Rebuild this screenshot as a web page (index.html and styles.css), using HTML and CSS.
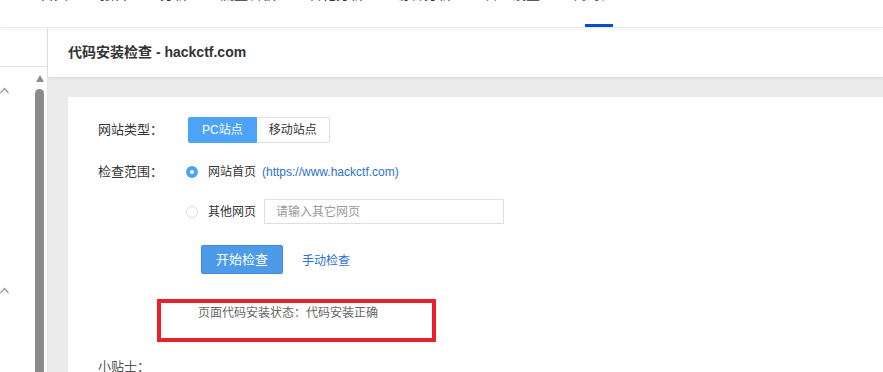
FILE: index.html
```html
<!DOCTYPE html>
<html>
<head>
<meta charset="utf-8">
<title>代码安装检查</title>
<link rel="stylesheet" href="styles.css">
</head>
<body>
<div class="topnav">
	<a class="nav-item">首页</a>
	<a class="nav-item">报告</a>
	<a class="nav-item">分析</a>
	<a class="nav-item">流量看板</a>
	<a class="nav-item">转化分析</a>
	<a class="nav-item">访客分析</a>
	<a class="nav-item">管理设置</a>
	<a class="nav-item active">代码检查</a>
</div>
<div class="main">
	<div class="side">
		<div class="side-top"></div>
		<div class="side-body">
			<div class="menu">
				<div class="menu-group">
					<svg class="chev" width="10" height="7" viewBox="0 0 10 7"><polyline points="0.5,6 4.5,1.5 8.5,6" fill="none" stroke="#8a96a8" stroke-width="1.2"/></svg>
				</div>
				<div class="menu-group">
					<svg class="chev" width="10" height="7" viewBox="0 0 10 7"><polyline points="0.5,6 4.5,1.5 8.5,6" fill="none" stroke="#8a96a8" stroke-width="1.2"/></svg>
				</div>
			</div>
			<div class="scrollbar">
				<span class="sb-arrow"></span>
				<span class="sb-thumb"></span>
			</div>
		</div>
	</div>
	<div class="content">
		<div class="head">代码安装检查 - hackctf.com</div>
		<div class="body">
			<div class="card">
				<div class="row">
					<span class="label">网站类型：</span>
					<div class="seg">
						<span class="seg-btn on">PC站点</span>
						<span class="seg-btn">移动站点</span>
					</div>
				</div>
				<div class="row top scope">
					<span class="label">检查范围：</span>
					<div class="options">
						<div class="opt">
							<span class="radio checked"></span>
							<span>网站首页</span>
							<span class="url">(https://www.hackctf.com)</span>
						</div>
						<div class="opt second">
							<span class="radio"></span>
							<span>其他网页</span>
							<input class="page-input" type="text" placeholder="请输入其它网页">
						</div>
					</div>
				</div>
				<div class="actions">
					<span class="btn">开始检查</span>
					<a class="link">手动检查</a>
				</div>
				<div class="status">页面代码安装状态：代码安装正确</div>
				<div class="mark"></div>
				<div class="tips">小贴士：</div>
			</div>
		</div>
	</div>
</div>
</body>
</html>
```

FILE: styles.css
```css
*{margin:0;padding:0;box-sizing:border-box;}
html,body{height:372px;overflow:hidden;}
body{background:#fff;font-family:"Liberation Sans","Noto Sans CJK SC",sans-serif;font-size:12px;color:#333;}

.topnav{height:28px;border-bottom:1px solid #ececec;display:flex;padding-left:40px;gap:32px;overflow:hidden;position:relative;z-index:2;box-shadow:0 1px 4px rgba(0,0,0,.05);background:#fff;}
.nav-item{font-size:14px;line-height:14px;margin-top:-13px;color:#333;position:relative;height:40px;}
.nav-item.active{color:#1d62d6;}
.nav-item.active:after{content:"";position:absolute;left:13px;top:37px;width:28px;height:3px;background:#0052cc;}

.main{display:flex;height:344px;}
.side{width:48px;border-right:1px solid #e6e6e6;background:#fff;display:flex;flex-direction:column;}
.side-top{height:39px;border-bottom:1px solid #e8e8e8;flex:none;}
.side-body{flex:1;display:flex;}
.menu{flex:1;overflow:hidden;}
.menu-group{height:200px;padding-top:20px;}
.chev{display:block;}
.scrollbar{width:9px;margin-right:3px;display:flex;flex-direction:column;align-items:center;padding-top:8px;}
.sb-arrow{width:0;height:0;border-left:4.5px solid transparent;border-right:4.5px solid transparent;border-bottom:7px solid #8d8d8d;}
.sb-thumb{flex:1;width:9px;margin-top:7px;background:#8b8b8b;border-radius:5px 5px 0 0;}

.content{flex:1;background:#ebebeb;display:flex;flex-direction:column;}
.head{height:49px;line-height:49px;padding-left:20px;background:#fff;font-size:14px;font-weight:bold;color:#333;box-shadow:0 1px 3px rgba(0,0,0,.08);position:relative;}
.body{flex:1;padding:20px 0 0 20px;}
.card{background:#fff;height:100%;padding:20px 30px;position:relative;}

.row{display:flex;align-items:center;}
.row.top{align-items:flex-start;}
.label{width:90px;font-size:13px;line-height:20px;color:#333;flex:none;}
.seg{display:flex;}
.seg-btn{height:26px;line-height:24px;padding:0 12px;border:1px solid #dcdfe6;color:#333;background:#fff;}
.seg-btn:first-child{border-radius:2px 0 0 2px;}
.seg-btn:last-child{border-left:none;border-radius:0 2px 2px 0;}
.seg-btn.on{background:#4da3f7;border-color:#4da3f7;color:#fff;padding:0 13px;}

.scope{margin-top:19px;}
.options{margin-left:-2px;}
.opt{display:flex;align-items:center;height:20px;line-height:20px;color:#333;}
.opt.second{height:25px;margin-top:17px;}
.radio{width:12px;height:12px;border-radius:50%;border:1px solid #dcdfe6;background:#fff;margin-right:10px;flex:none;}
.radio.checked{border:4px solid #4da3f7;background:#fff;}
.url{color:#2b71d4;margin-left:6px;}
.page-input{width:240px;height:25px;margin-left:8px;border:1px solid #dcdfe6;padding-left:11px;font:12px "Liberation Sans","Noto Sans CJK SC",sans-serif;color:#333;outline:none;}
.page-input::placeholder{color:#999;}

.actions{display:flex;align-items:center;margin:21px 0 0 103px;}
.btn{width:82px;height:29px;line-height:27px;text-align:center;background:#4d9be8;border:1px solid #3e8ddc;border-radius:2px;color:#fff;font-size:13px;}
.link{margin-left:19px;color:#2b71d4;font-size:12px;}

.status{margin:29px 0 0 100px;line-height:21px;color:#666;}
.mark{position:absolute;left:89px;top:202px;width:279px;height:43px;border:4px solid #e8212b;}
.tips{margin-top:33px;font-size:13px;line-height:20px;color:#555;}
```
